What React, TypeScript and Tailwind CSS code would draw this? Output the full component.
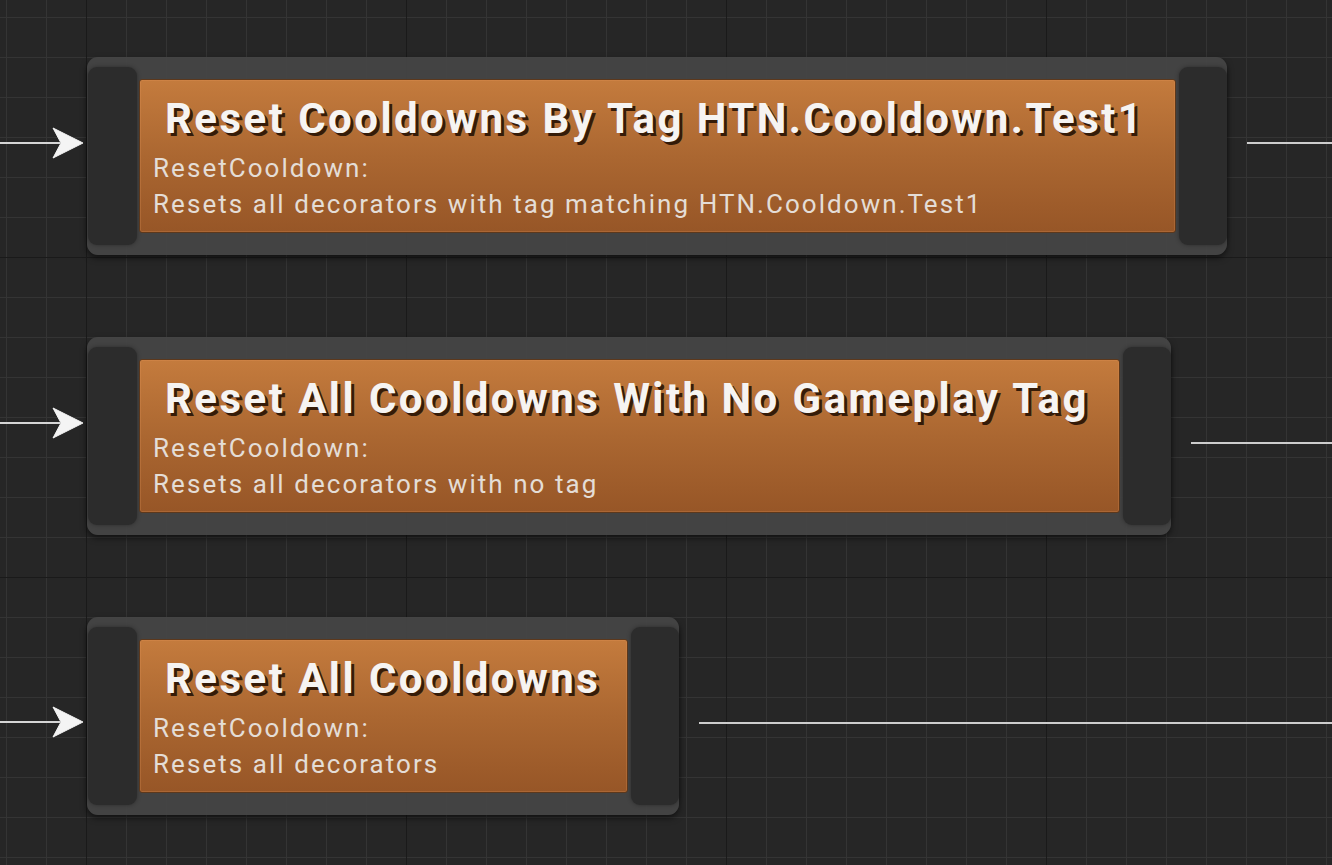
import React from "react";

type TaskNode = {
  title: string;
  desc: string;
  bodyWidth: string;
  inY: number;
  outTop: string;
};

const nodes: TaskNode[] = [
  {
    title: "Reset Cooldowns By Tag HTN.Cooldown.Test1",
    desc: "Resets all decorators with tag matching HTN.Cooldown.Test1",
    bodyWidth: "w-[1037px]",
    inY: 86,
    outTop: "mt-[85px]",
  },
  {
    title: "Reset All Cooldowns With No Gameplay Tag",
    desc: "Resets all decorators with no tag",
    bodyWidth: "w-[981px]",
    inY: 86,
    outTop: "mt-[105px]",
  },
  {
    title: "Reset All Cooldowns",
    desc: "Resets all decorators",
    bodyWidth: "w-[489px]",
    inY: 105,
    outTop: "mt-[105px]",
  },
];

// incoming exec wire + arrow pin
function InputWire({ y }: { y: number }) {
  return (
    <svg width="87" height="198" viewBox="0 0 87 198" className="shrink-0">
      <line x1="0" y1={y} x2="60" y2={y} stroke="#d6d6d6" strokeWidth="2" />
      <path
        d={`M53 ${y - 15} L83 ${y} L53 ${y + 15} L61 ${y} Z`}
        fill="#f4f4f4"
        stroke="#f4f4f4"
        strokeWidth="1"
        strokeLinejoin="round"
      />
    </svg>
  );
}

function Node({ node }: { node: TaskNode }) {
  return (
    <div className="flex shrink-0 items-center gap-[2px] rounded-[11px] bg-[rgba(70,70,70,0.93)] py-[10px] pl-[1px] shadow-[0_3px_6px_rgba(0,0,0,0.55)]">
      {/* left pin area */}
      <div className="h-[178px] w-[49px] rounded-[9px] bg-[#2c2c2c] shadow-[0_0_4px_rgba(0,0,0,0.35)]" />

      {/* task body */}
      <div
        className={`${node.bodyWidth} h-[154px] rounded-[3px] border border-[#5c381c] bg-linear-to-b from-[#c47b3d] via-[#ab6731] to-[#975627] shadow-[inset_0_0_0_1px_rgba(230,150,90,0.25)] pt-[15px] pb-[10px] pl-[13px] font-['Roboto',sans-serif]`}
      >
        <div className="whitespace-nowrap pl-[12px] text-[42px] leading-[48px] font-bold tracking-[2.45px] text-[#f6f4f2] [text-shadow:3px_3px_0.5px_rgba(30,12,0,0.85)]">
          {node.title}
        </div>
        <div className="mt-[7px] whitespace-nowrap text-[26px] leading-[36px] tracking-[2.05px] text-[#e4ddd6]">
          <div>ResetCooldown:</div>
          <div>{node.desc}</div>
        </div>
      </div>

      {/* right pin area */}
      <div className="ml-[1px] h-[178px] w-[48px] rounded-[9px] bg-[#2c2c2c] shadow-[0_0_4px_rgba(0,0,0,0.35)]" />
    </div>
  );
}

export default function App() {
  return (
    <div className="h-[865px] w-[1332px] overflow-hidden bg-[#262626] [background-image:linear-gradient(to_right,#1a1a1a_1px,transparent_1px),linear-gradient(to_bottom,#1a1a1a_1px,transparent_1px),linear-gradient(to_right,#343434_1px,transparent_1px),linear-gradient(to_bottom,#343434_1px,transparent_1px)] [background-size:320px_320px,320px_320px,40px_40px,40px_40px] [background-position:86px_257px,86px_257px,6px_17px,6px_17px]">
      <div className="flex flex-col gap-[82px] pt-[57px]">
        {nodes.map((node) => (
          <div key={node.title} className="flex h-[198px] items-start">
            <InputWire y={node.inY} />
            <Node node={node} />
            <div className="flex-1 pl-[20px]">
              <div className={`${node.outTop} h-[2px] bg-[#cdcdcd]`} />
            </div>
          </div>
        ))}
      </div>
    </div>
  );
}
